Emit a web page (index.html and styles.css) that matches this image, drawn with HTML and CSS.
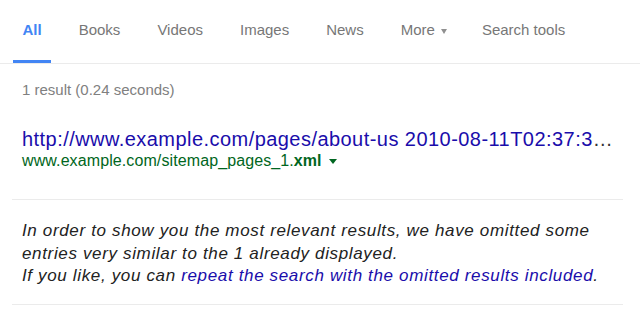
FILE: index.html
```html
<!DOCTYPE html>
<html lang="en">
<head>
    <meta charset="UTF-8">
    <meta name="viewport" content="width=device-width, initial-scale=1.0">
    <title>Search results</title>
    <link rel="stylesheet" href="styles.css">
</head>
<body>
    <!-- 검색 탭 -->
    <div class="tabs">
        <a class="tab active">All</a>
        <a class="tab">Books</a>
        <a class="tab">Videos</a>
        <a class="tab">Images</a>
        <a class="tab">News</a>
        <a class="tab more">More<span class="caret gray"></span></a>
        <a class="tab">Search tools</a>
    </div>

    <div class="stats">1 result (0.24 seconds)</div>

    <!-- 검색 결과 -->
    <div class="result">
        <a class="title">http://www.example.com/pages/about-us 2010-08-11T02:37:3<span class="dots">…</span></a>
        <div class="url">www.example.com/sitemap_pages_1.<b>xml</b> <span class="caret green"></span></div>
    </div>

    <!-- 생략된 결과 안내 -->
    <div class="omitted">
        <p>
            In order to show you the most relevant results, we have omitted some
            entries very similar to the 1 already displayed.<br>
            If you like, you can <a>repeat the search with the omitted results included</a>.
        </p>
    </div>
</body>
</html>
```

FILE: styles.css
```css
/* 기본 스타일 */
body {
    margin: 0;
    background-color: #fff;
    font-family: "Liberation Sans", Arial, sans-serif;
    color: #222;
}

a {
    cursor: pointer;
}

/* 탭 영역 */
.tabs {
    display: flex;
    gap: 18px;
    padding-left: 13px;
    border-bottom: 1px solid #ebebeb;
}

.tab {
    padding: 20px 9.5px 20px;
    font-size: 15px;
    line-height: 20px;
    color: #777;
    border-bottom: 3px solid transparent;
}

.tab.more {
    padding-right: 7.5px;
}

.tab.active {
    color: #4285f4;
    font-weight: bold;
    border-bottom-color: #4285f4;
}

/* 작은 삼각형 */
.caret {
    display: inline-block;
    width: 0;
    height: 0;
    margin-left: 6px;
    vertical-align: middle;
    border-left: 3.5px solid transparent;
    border-right: 3.5px solid transparent;
    border-top: 5px solid #909090;
}

.caret.green {
    border-top-color: #006621;
    margin-left: 3px;
    border-left-width: 4px;
    border-right-width: 4px;
}

/* 결과 수 */
.stats {
    padding: 16px 22px 0;
    font-size: 15px;
    line-height: 20px;
    color: #808080;
}

/* 결과 항목 */
.result {
    margin: 27px 17px 0 12px;
    padding: 0 10px 28px;
    border-bottom: 1px solid #ebebeb;
}

.title {
    display: block;
    font-size: 20px;
    line-height: 24px;
    letter-spacing: 0.45px;
    color: #1a0dab;
    white-space: nowrap;
}

.title .dots {
    color: #333;
}

.url {
    font-size: 16px;
    line-height: 20px;
    letter-spacing: 0.1px;
    color: #006621;
}

/* 생략 안내 */
.omitted {
    margin: 0 17px 0 12px;
    padding: 20px 10px 16px;
    border-bottom: 1px solid #ebebeb;
}

.omitted p {
    margin: 0;
    font-size: 17px;
    line-height: 22.5px;
    letter-spacing: 0.65px;
    font-style: italic;
    color: #222;
}

.omitted a {
    color: #1a0dab;
}
```
